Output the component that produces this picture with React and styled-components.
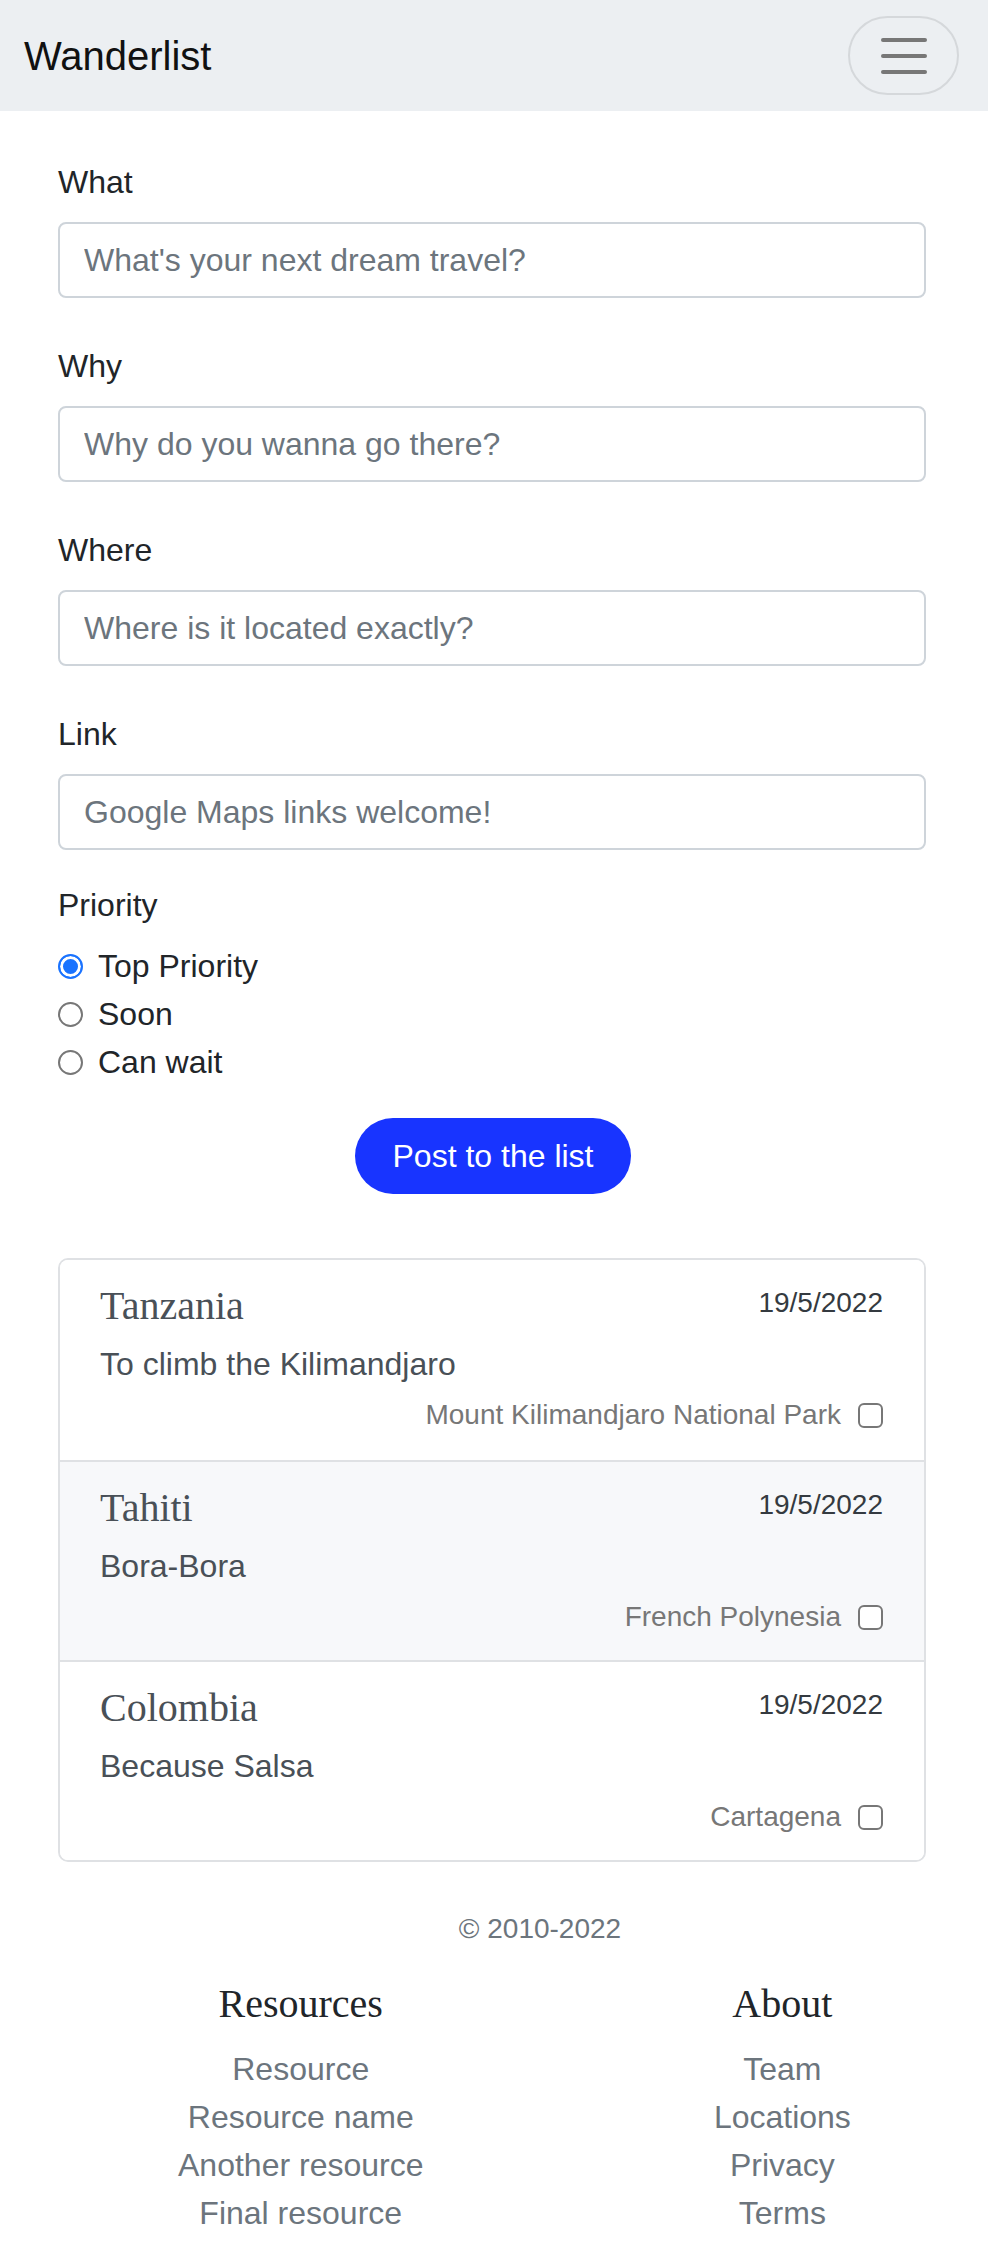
import { useState } from 'react';
import styled, { createGlobalStyle } from 'styled-components';

const GlobalStyle = createGlobalStyle`
  * { box-sizing: border-box; }
  body {
    margin: 0;
    background: #fff;
    color: #212529;
    font-family: "Liberation Sans", Arial, sans-serif;
  }
`;

const items = [
  { title: 'Tanzania', why: 'To climb the Kilimandjaro', where: 'Mount Kilimandjaro National Park', date: '19/5/2022' },
  { title: 'Tahiti', why: 'Bora-Bora', where: 'French Polynesia', date: '19/5/2022', shaded: true },
  { title: 'Colombia', why: 'Because Salsa', where: 'Cartagena', date: '19/5/2022' },
];

const fields = [
  { label: 'What', placeholder: "What's your next dream travel?" },
  { label: 'Why', placeholder: 'Why do you wanna go there?' },
  { label: 'Where', placeholder: 'Where is it located exactly?' },
  { label: 'Link', placeholder: 'Google Maps links welcome!' },
];

const priorities = ['Top Priority', 'Soon', 'Can wait'];

export default function App() {
  const [priority, setPriority] = useState('Top Priority');

  return (
    <>
      <GlobalStyle />
      <Navbar>
        <Brand>Wanderlist</Brand>
        <Toggler aria-label="menu">
          <Bar />
          <Bar />
          <Bar />
        </Toggler>
      </Navbar>

      <Main>
        <Form onSubmit={(e) => e.preventDefault()}>
          {fields.map((f, i) => (
            <Field key={f.label} $last={i === fields.length - 1}>
              <Label>{f.label}</Label>
              <Input type="text" placeholder={f.placeholder} />
            </Field>
          ))}

          <PriorityLabel>Priority</PriorityLabel>
          <Radios>
            {priorities.map((p) => (
              <RadioRow key={p} onClick={() => setPriority(p)}>
                <RadioDot $checked={priority === p} />
                <span>{p}</span>
              </RadioRow>
            ))}
          </Radios>

          <ButtonRow>
            <PostButton type="submit">Post to the list</PostButton>
          </ButtonRow>
        </Form>

        <List>
          {items.map((it) => (
            <Item key={it.title} $shaded={it.shaded}>
              <ItemHead>
                <ItemTitle>{it.title}</ItemTitle>
                <ItemDate>{it.date}</ItemDate>
              </ItemHead>
              <ItemWhy>{it.why}</ItemWhy>
              <ItemFoot>
                <ItemWhere>{it.where}</ItemWhere>
                <Check />
              </ItemFoot>
            </Item>
          ))}
        </List>
      </Main>

      <Footer>
        <Copyright>© 2010-2022</Copyright>
        <FooterCols>
          <FooterCol>
            <FooterHeading>Resources</FooterHeading>
            <FooterLink>Resource</FooterLink>
            <FooterLink>Resource name</FooterLink>
            <FooterLink>Another resource</FooterLink>
            <FooterLink>Final resource</FooterLink>
          </FooterCol>
          <div />
          <FooterCol>
            <FooterHeading>About</FooterHeading>
            <FooterLink>Team</FooterLink>
            <FooterLink>Locations</FooterLink>
            <FooterLink>Privacy</FooterLink>
            <FooterLink>Terms</FooterLink>
          </FooterCol>
        </FooterCols>
      </Footer>
    </>
  );
}

const Navbar = styled.nav`
  display: flex;
  align-items: center;
  justify-content: space-between;
  height: 111px;
  padding: 0 29px 0 24px;
  background: #eceff2;
`;

const Brand = styled.div`
  font-size: 40px;
  line-height: 48px;
  color: #111;
`;

const Toggler = styled.button`
  display: flex;
  flex-direction: column;
  align-items: center;
  justify-content: center;
  gap: 12px;
  width: 111px;
  height: 79px;
  padding: 0;
  border: 2px solid #d5d8db;
  border-radius: 40px;
  background: transparent;
`;

const Bar = styled.span`
  display: block;
  width: 46px;
  height: 4px;
  border-radius: 2px;
  background: #777;
`;

const Main = styled.main`
  padding: 47px 62px 0 58px;
`;

const Form = styled.form`
  display: flex;
  flex-direction: column;
`;

const Field = styled.div`
  display: flex;
  flex-direction: column;
  gap: 16px;
  margin-bottom: ${(p) => (p.$last ? '31px' : '44px')};
`;

const Label = styled.label`
  font-size: 32px;
  line-height: 48px;
  color: #212529;
`;

const Input = styled.input`
  width: 100%;
  height: 76px;
  padding: 0 24px;
  border: 2px solid #ced4da;
  border-radius: 8px;
  font-family: "Liberation Sans", Arial, sans-serif;
  font-size: 32px;
  color: #212529;
  &::placeholder {
    color: #6c757d;
  }
  &:focus {
    outline: none;
    border-color: #86b7fe;
  }
`;

const PriorityLabel = styled(Label)`
  margin-bottom: 13px;
`;

const Radios = styled.div`
  display: flex;
  flex-direction: column;
`;

const RadioRow = styled.label`
  display: flex;
  align-items: center;
  gap: 15px;
  font-size: 32px;
  line-height: 48px;
  color: #212529;
  cursor: pointer;
`;

const RadioDot = styled.span`
  width: 25px;
  height: 25px;
  border-radius: 50%;
  flex-shrink: 0;
  border: ${(p) => (p.$checked ? '2px solid #1a73ff' : '2px solid #777')};
  background: ${(p) => (p.$checked ? '#1a73ff' : '#fff')};
  box-shadow: ${(p) => (p.$checked ? 'inset 0 0 0 3px #fff' : 'none')};
`;

const ButtonRow = styled.div`
  display: flex;
  justify-content: center;
  margin-top: 32px;
  padding-left: 2px;
`;

const PostButton = styled.button`
  width: 276px;
  height: 76px;
  border: none;
  border-radius: 38px;
  background: #1834ff;
  color: #fff;
  font-family: "Liberation Sans", Arial, sans-serif;
  font-size: 32px;
  cursor: pointer;
`;

const List = styled.ul`
  list-style: none;
  margin: 64px 0 0;
  padding: 0;
  border: 2px solid #dfe1e4;
  border-radius: 10px;
  overflow: hidden;
`;

const Item = styled.li`
  display: flex;
  flex-direction: column;
  height: 200px;
  padding: 22px 41px 0 40px;
  background: ${(p) => (p.$shaded ? '#f7f8fa' : '#fff')};
  & + & {
    border-top: 2px solid #dfe1e4;
  }
`;

const ItemHead = styled.div`
  display: flex;
  justify-content: space-between;
  align-items: flex-start;
`;

const ItemTitle = styled.h5`
  margin: 0;
  font-family: "Liberation Serif", "Times New Roman", serif;
  font-weight: 400;
  font-size: 40px;
  line-height: 48px;
  color: #495057;
`;

const ItemDate = styled.small`
  font-size: 28px;
  line-height: 42px;
  color: #343a40;
`;

const ItemWhy = styled.p`
  margin: 10px 0 6px;
  font-size: 32px;
  line-height: 48px;
  color: #495057;
`;

const ItemFoot = styled.div`
  display: flex;
  justify-content: flex-end;
  align-items: center;
  gap: 17px;
`;

const ItemWhere = styled.small`
  font-size: 28px;
  line-height: 42px;
  color: #777;
`;

const Check = styled.span`
  width: 25px;
  height: 25px;
  border: 2px solid #777;
  border-radius: 6px;
  background: #fff;
`;

const Footer = styled.footer`
  padding: 46px 86px 27px 178px;
`;

const Copyright = styled.p`
  margin: 0 0 30px;
  text-align: center;
  font-size: 28px;
  line-height: 42px;
  color: #6c757d;
`;

const FooterCols = styled.div`
  display: grid;
  grid-template-columns: 1fr 1fr 1fr;
`;

const FooterCol = styled.div`
  display: flex;
  flex-direction: column;
  align-items: center;
`;

const FooterHeading = styled.h5`
  margin: 0 0 17px;
  font-family: "Liberation Serif", "Times New Roman", serif;
  font-weight: 400;
  font-size: 40px;
  line-height: 48px;
  color: #212529;
  white-space: nowrap;
`;

const FooterLink = styled.a`
  font-size: 32px;
  line-height: 48px;
  color: #6c757d;
  white-space: nowrap;
  text-decoration: none;
`;
